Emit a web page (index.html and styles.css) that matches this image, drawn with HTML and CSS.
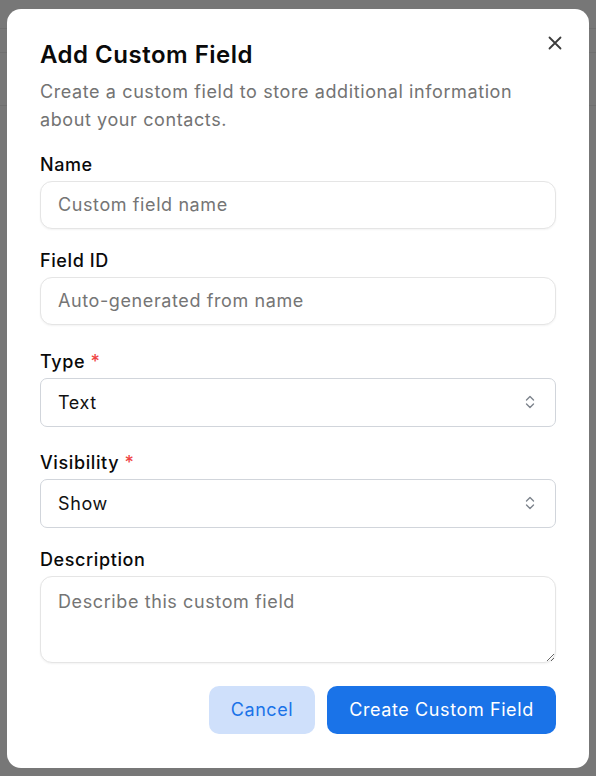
FILE: index.html
```html
<!DOCTYPE html>
<html lang="en">
<head>
<meta charset="utf-8">
<title>Add Custom Field</title>
<link rel="stylesheet" href="styles.css">
</head>
<body>
<div class="backdrop">
  <div class="dialog">
    <button class="close" aria-label="Close">
      <svg width="16" height="16" viewBox="0 0 16 16"><path d="M2.5 2.5L13.5 13.5M13.5 2.5L2.5 13.5" stroke="#3c3c3c" stroke-width="1.8" stroke-linecap="round"/></svg>
    </button>
    <h2 class="title">Add Custom Field</h2>
    <p class="subtitle">Create a custom field to store additional information about your contacts.</p>

    <div class="field">
      <label class="label">Name</label>
      <input class="input" type="text" placeholder="Custom field name">
    </div>

    <div class="field">
      <label class="label">Field ID</label>
      <input class="input" type="text" placeholder="Auto-generated from name">
    </div>

    <div class="field field-select">
      <label class="label">Type <span class="req">*</span></label>
      <div class="select">
        <span>Text</span>
        <svg width="12" height="16" viewBox="0 0 12 16"><path d="M2.5 6L6 2.5L9.5 6M2.5 10L6 13.5L9.5 10" fill="none" stroke="#7d838c" stroke-width="1.4" stroke-linecap="round" stroke-linejoin="round"/></svg>
      </div>
    </div>

    <div class="field field-select">
      <label class="label">Visibility <span class="req">*</span></label>
      <div class="select">
        <span>Show</span>
        <svg width="12" height="16" viewBox="0 0 12 16"><path d="M2.5 6L6 2.5L9.5 6M2.5 10L6 13.5L9.5 10" fill="none" stroke="#7d838c" stroke-width="1.4" stroke-linecap="round" stroke-linejoin="round"/></svg>
      </div>
    </div>

    <div class="field field-desc">
      <label class="label">Description</label>
      <textarea class="input textarea" placeholder="Describe this custom field"></textarea>
    </div>

    <div class="actions">
      <button class="btn btn-secondary">Cancel</button>
      <button class="btn btn-primary">Create Custom Field</button>
    </div>
  </div>
</div>
</body>
</html>
```
FILE: styles.css
```css
* { box-sizing: border-box; }
html, body { margin: 0; padding: 0; }
body {
  font-family: Inter, "Noto Sans", "Liberation Sans", sans-serif;
  background: #777777;
  color: #111111;
}
.backdrop {
  width: 596px;
  height: 776px;
  display: flex;
  align-items: center;
  justify-content: center;
  background:
    linear-gradient(#6f6f6f, #6f6f6f) 0 28px / 100% 1px no-repeat,
    linear-gradient(#6f6f6f, #6f6f6f) 0 52px / 100% 1px no-repeat,
    linear-gradient(#6f6f6f, #6f6f6f) 0 105px / 100% 1px no-repeat,
    #777777;
}
.dialog {
  position: relative;
  width: 582px;
  height: 759px;
  background: #ffffff;
  border-radius: 14px;
  padding: 31px 33px 34px 33px;
  display: flex;
  flex-direction: column;
  letter-spacing: 0.6px;
}
.close {
  position: absolute;
  top: 26px;
  right: 26px;
  width: 16px;
  height: 16px;
  padding: 0;
  border: 0;
  background: none;
  display: flex;
}
.title {
  margin: 0;
  font-size: 24px;
  line-height: 30px;
  font-weight: 600;
  color: #0a0a0a;
  letter-spacing: 0.5px;
}
.subtitle {
  margin: 8px 0 0 0;
  font-size: 18px;
  line-height: 28px;
  color: #737373;
}
.field {
  display: flex;
  flex-direction: column;
  gap: 4px;
  margin-top: 19px;
}
.field + .field { margin-top: 20px; }
.field + .field-select { margin-top: 25px; }
.field-select + .field-select { margin-top: 24px; }
.field-select + .field-desc { margin-top: 20px; }
.label {
  font-size: 18px;
  line-height: 24px;
  font-weight: 500;
  color: #0a0a0a;
}
.req { color: #ef4444; }
.input {
  width: 100%;
  height: 48px;
  border: 1px solid #e5e5e5;
  border-radius: 12px;
  padding: 0 17px;
  font: inherit;
  font-size: 18px;
  letter-spacing: 0.6px;
  color: #111;
  background: #fff;
  box-shadow: 0 1px 2px rgba(0,0,0,0.05);
  outline: none;
}
.input::placeholder { color: #757575; }
.textarea {
  height: 87px;
  padding: 12px 17px;
  line-height: 26px;
  resize: vertical;
}
.select {
  height: 49px;
  border: 1px solid #d1d5db;
  border-radius: 7px;
  padding: 0 17px 0 17px;
  display: flex;
  align-items: center;
  justify-content: space-between;
  font-size: 18px;
  color: #111;
  background: #fff;
}
.select svg { margin-right: 2px; }
.actions {
  margin-top: 23px;
  display: flex;
  justify-content: flex-end;
  gap: 12px;
}
.btn {
  height: 48px;
  border: 0;
  border-radius: 10px;
  font: inherit;
  font-size: 18px;
  letter-spacing: 0.6px;
  padding: 0 20px;
}
.btn-secondary {
  width: 106px;
  background: #cfe0fb;
  color: #1a73e8;
}
.btn-primary {
  width: 229px;
  background: #1a73e8;
  color: #ffffff;
}
```
